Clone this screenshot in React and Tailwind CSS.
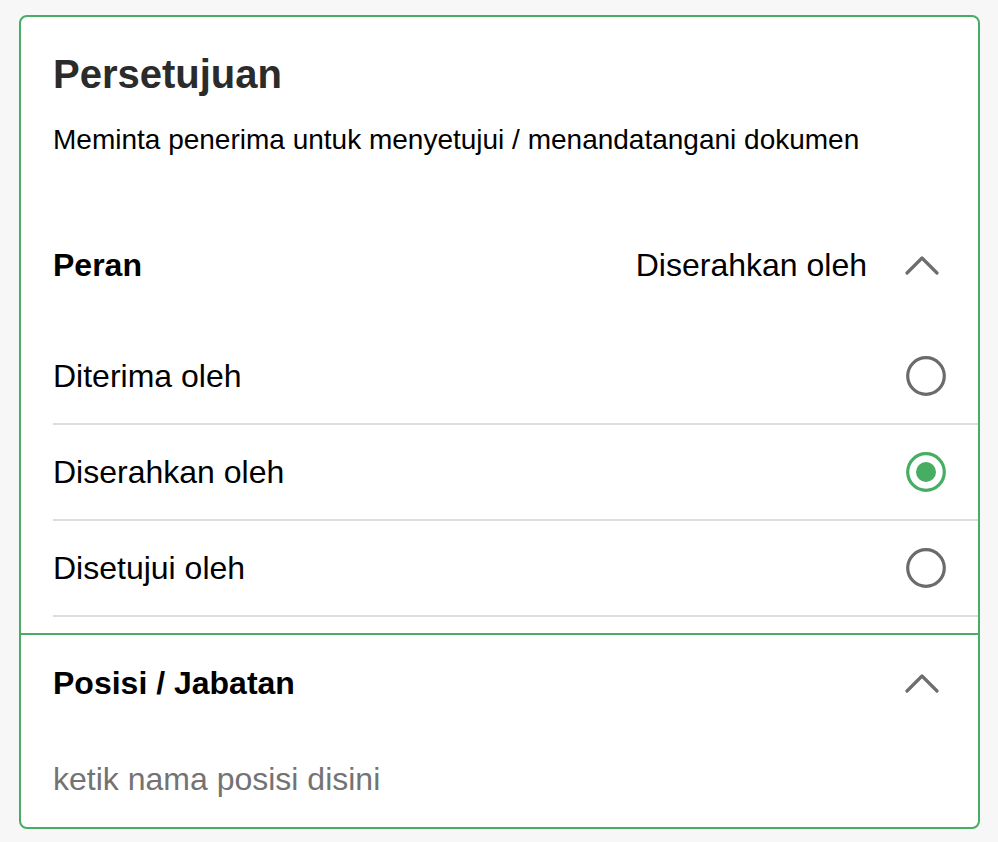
import React, { useState } from 'react';

const GREEN = '#47ad63';

function Chevron() {
    return (
        <svg width="34" height="20" viewBox="0 0 34 20" fill="none" className="shrink-0">
            <path d="M2 18 L17 3 L32 18" stroke="#6e6e6e" strokeWidth="3.2" strokeLinecap="round" strokeLinejoin="round" />
        </svg>
    );
}

function Radio({ checked }) {
    return (
        <svg width="40" height="40" viewBox="0 0 40 40" fill="none" className="shrink-0">
            <circle cx="20" cy="20" r="18.3" stroke={checked ? GREEN : '#6b6b6b'} strokeWidth="3.2" />
            {checked && <circle cx="20" cy="20" r="10" fill={GREEN} />}
        </svg>
    );
}

export default function App() {
    const [role, setRole] = useState('Diserahkan oleh');
    const [posisi, setPosisi] = useState('');
    const roles = ['Diterima oleh', 'Diserahkan oleh', 'Disetujui oleh'];

    return (
        <div
            className="min-h-screen bg-[#f7f7f7] pt-[15px] pl-[19px]"
            style={{ fontFamily: '"Liberation Sans", Arial, sans-serif' }}
        >
            <div className="w-[961px] bg-white border-2 border-[#47ad63] rounded-[8px] overflow-hidden text-black">
                {/* Header */}
                <div className="pl-[32px] pr-[32px] pt-[33px]">
                    <h1 className="text-[40px] leading-[48px] font-bold text-[#2b2b2b]">Persetujuan</h1>
                    <p className="mt-[26px] text-[28px] leading-[32px]">
                        Meminta penerima untuk menyetujui / menandatangani dokumen
                    </p>
                </div>

                {/* Peran */}
                <div className="mt-[61px] pl-[32px] pb-[16px]">
                    <div className="h-[96px] flex items-center pr-[39px]">
                        <span className="text-[32px] leading-[40px] font-bold">Peran</span>
                        <span className="ml-auto mr-[38px] text-[32px] leading-[40px]">{role}</span>
                        <Chevron />
                    </div>
                    <div className="mt-[16px]">
                        {roles.map((r) => (
                            <button
                                key={r}
                                onClick={() => setRole(r)}
                                className="w-full h-[96px] flex items-center pr-[32px] border-b-2 border-[#dddddd] text-left"
                            >
                                <span className="text-[32px] leading-[40px]">{r}</span>
                                <span className="ml-auto">
                                    <Radio checked={role === r} />
                                </span>
                            </button>
                        ))}
                    </div>
                </div>

                {/* Posisi / Jabatan */}
                <div className="border-t-2 border-[#47ad63] pl-[32px]">
                    <div className="h-[96px] flex items-center pr-[39px]">
                        <span className="text-[32px] leading-[40px] font-bold">Posisi / Jabatan</span>
                        <span className="ml-auto">
                            <Chevron />
                        </span>
                    </div>
                    <div className="h-[96px] flex items-center pr-[32px]">
                        <input
                            type="text"
                            value={posisi}
                            onChange={(e) => setPosisi(e.target.value)}
                            placeholder="ketik nama posisi disini"
                            className="w-full bg-transparent outline-none text-[32px] leading-[40px] placeholder:text-[#737373]"
                        />
                    </div>
                </div>
            </div>
        </div>
    );
}
